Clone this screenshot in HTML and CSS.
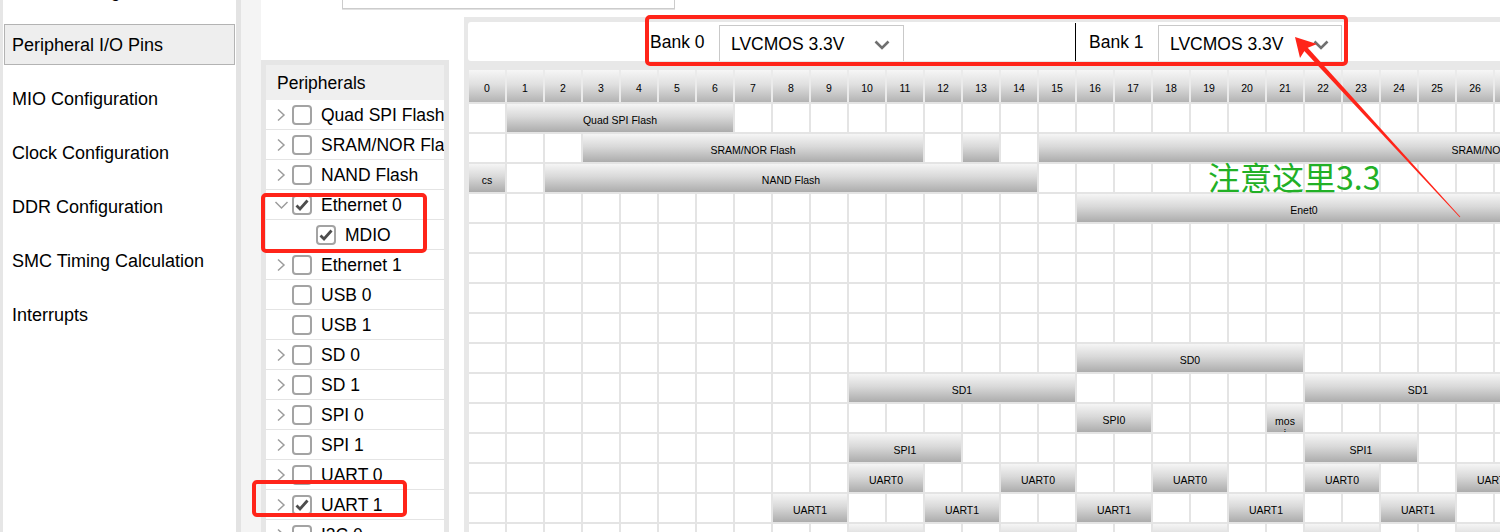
FILE: index.html
```html
<!DOCTYPE html>
<html>
<head>
<meta charset="utf-8">
<link rel="stylesheet" href="styles.css">
</head>
<body>
<div class="app">
  <aside class="sidebar">
    <div class="nav">
      <div class="nav-item">PS-PL Configuration</div>
      <div class="nav-item sel">Peripheral I/O Pins</div>
      <div class="nav-item">MIO Configuration</div>
      <div class="nav-item">Clock Configuration</div>
      <div class="nav-item">DDR Configuration</div>
      <div class="nav-item">SMC Timing Calculation</div>
      <div class="nav-item">Interrupts</div>
    </div>
  </aside>
  <div class="gutter"></div>
  <main class="main">
    <div class="search"></div>
    <div class="work">
      <div class="leftcol">
        <section class="periph">
          <div class="periph-head">Peripherals</div>
          <div class="periph-list">
            <div class="prow"><span class="chev"><svg width="10" height="14" viewBox="0 0 10 14"><polyline points="2,1.5 8,7 2,12.5"/></svg></span><span class="cb"></span><span class="lbl">Quad SPI Flash</span></div>
            <div class="prow"><span class="chev"><svg width="10" height="14" viewBox="0 0 10 14"><polyline points="2,1.5 8,7 2,12.5"/></svg></span><span class="cb"></span><span class="lbl">SRAM/NOR Flash</span></div>
            <div class="prow"><span class="chev"><svg width="10" height="14" viewBox="0 0 10 14"><polyline points="2,1.5 8,7 2,12.5"/></svg></span><span class="cb"></span><span class="lbl">NAND Flash</span></div>
            <div class="prow"><span class="chev down"><svg width="15" height="10" viewBox="0 0 15 10"><polyline points="1.5,2 7.5,8 13.5,2"/></svg></span><span class="cb on"><svg width="16" height="16" viewBox="0 0 16 16"><polyline points="2.5,8.5 6,12 13.5,3.5"/></svg></span><span class="lbl">Ethernet 0</span></div>
            <div class="prow child"><span class="cb on"><svg width="16" height="16" viewBox="0 0 16 16"><polyline points="2.5,8.5 6,12 13.5,3.5"/></svg></span><span class="lbl">MDIO</span></div>
            <div class="prow"><span class="chev"><svg width="10" height="14" viewBox="0 0 10 14"><polyline points="2,1.5 8,7 2,12.5"/></svg></span><span class="cb"></span><span class="lbl">Ethernet 1</span></div>
            <div class="prow"><span class="chev"></span><span class="cb"></span><span class="lbl">USB 0</span></div>
            <div class="prow"><span class="chev"></span><span class="cb"></span><span class="lbl">USB 1</span></div>
            <div class="prow"><span class="chev"><svg width="10" height="14" viewBox="0 0 10 14"><polyline points="2,1.5 8,7 2,12.5"/></svg></span><span class="cb"></span><span class="lbl">SD 0</span></div>
            <div class="prow"><span class="chev"><svg width="10" height="14" viewBox="0 0 10 14"><polyline points="2,1.5 8,7 2,12.5"/></svg></span><span class="cb"></span><span class="lbl">SD 1</span></div>
            <div class="prow"><span class="chev"><svg width="10" height="14" viewBox="0 0 10 14"><polyline points="2,1.5 8,7 2,12.5"/></svg></span><span class="cb"></span><span class="lbl">SPI 0</span></div>
            <div class="prow"><span class="chev"><svg width="10" height="14" viewBox="0 0 10 14"><polyline points="2,1.5 8,7 2,12.5"/></svg></span><span class="cb"></span><span class="lbl">SPI 1</span></div>
            <div class="prow"><span class="chev"><svg width="10" height="14" viewBox="0 0 10 14"><polyline points="2,1.5 8,7 2,12.5"/></svg></span><span class="cb"></span><span class="lbl">UART 0</span></div>
            <div class="prow"><span class="chev"><svg width="10" height="14" viewBox="0 0 10 14"><polyline points="2,1.5 8,7 2,12.5"/></svg></span><span class="cb on"><svg width="16" height="16" viewBox="0 0 16 16"><polyline points="2.5,8.5 6,12 13.5,3.5"/></svg></span><span class="lbl">UART 1</span></div>
            <div class="prow"><span class="chev"><svg width="10" height="14" viewBox="0 0 10 14"><polyline points="2,1.5 8,7 2,12.5"/></svg></span><span class="cb"></span><span class="lbl">I2C 0</span></div>
          </div>
        </section>
      </div>
      <section class="pins">
        <div class="banks">
          <span class="bank-lbl">Bank 0</span>
          <div class="select s0"><span>LVCMOS 3.3V</span><svg width="16" height="10" viewBox="0 0 16 10"><polyline points="1.5,1.5 8,8 14.5,1.5"/></svg></div>
          <span class="bank-sep"></span>
          <span class="bank-lbl">Bank 1</span>
          <div class="select s1"><span>LVCMOS 3.3V</span><svg width="16" height="10" viewBox="0 0 16 10"><polyline points="1.5,1.5 8,8 14.5,1.5"/></svg></div>
        </div>
        <div class="grid">
          <div class="hdr">
            <div>0</div><div>1</div><div>2</div><div>3</div><div>4</div><div>5</div><div>6</div><div>7</div><div>8</div><div>9</div>
            <div>10</div><div>11</div><div>12</div><div>13</div><div>14</div><div>15</div><div>16</div><div>17</div><div>18</div><div>19</div>
            <div>20</div><div>21</div><div>22</div><div>23</div><div>24</div><div>25</div><div>26</div><div>27</div><div>28</div><div>29</div>
          </div>
          <div class="mrow">
            <div class="bar" style="grid-column:2/span 6">Quad SPI Flash</div>
          </div>
          <div class="mrow">
            <div class="bar" style="grid-column:4/span 9">SRAM/NOR Flash</div>
            <div class="bar" style="grid-column:14/span 1"></div>
            <div class="bar" style="grid-column:16/span 24">SRAM/NOR Flash</div>
          </div>
          <div class="mrow">
            <div class="bar" style="grid-column:1/span 1">cs</div>
            <div class="bar" style="grid-column:3/span 13">NAND Flash</div>
          </div>
          <div class="mrow">
            <div class="bar" style="grid-column:17/span 12">Enet0</div>
          </div>
          <div class="mrow"></div>
          <div class="mrow"></div>
          <div class="mrow"></div>
          <div class="mrow"></div>
          <div class="mrow">
            <div class="bar" style="grid-column:17/span 6">SD0</div>
          </div>
          <div class="mrow">
            <div class="bar" style="grid-column:11/span 6">SD1</div>
            <div class="bar" style="grid-column:23/span 6">SD1</div>
          </div>
          <div class="mrow">
            <div class="bar" style="grid-column:17/span 2">SPI0</div>
            <div class="bar wrap" style="grid-column:22/span 1">mos<br>i</div>
          </div>
          <div class="mrow">
            <div class="bar" style="grid-column:11/span 3">SPI1</div>
            <div class="bar" style="grid-column:23/span 3">SPI1</div>
          </div>
          <div class="mrow">
            <div class="bar" style="grid-column:11/span 2">UART0</div>
            <div class="bar" style="grid-column:15/span 2">UART0</div>
            <div class="bar" style="grid-column:19/span 2">UART0</div>
            <div class="bar" style="grid-column:23/span 2">UART0</div>
            <div class="bar" style="grid-column:27/span 2">UART0</div>
          </div>
          <div class="mrow">
            <div class="bar" style="grid-column:9/span 2">UART1</div>
            <div class="bar" style="grid-column:13/span 2">UART1</div>
            <div class="bar" style="grid-column:17/span 2">UART1</div>
            <div class="bar" style="grid-column:21/span 2">UART1</div>
            <div class="bar" style="grid-column:25/span 2">UART1</div>
          </div>
          <div class="mrow">
            <div class="bar" style="grid-column:11/span 2">I2C0</div>
            <div class="bar" style="grid-column:15/span 2">I2C0</div>
            <div class="bar" style="grid-column:19/span 2">I2C0</div>
            <div class="bar" style="grid-column:23/span 2">I2C0</div>
            <div class="bar" style="grid-column:27/span 2">I2C0</div>
          </div>
        </div>
      </section>
    </div>
  </main>
</div>

<div class="mark mark-bank"></div>
<div class="mark mark-eth"></div>
<div class="mark mark-uart"></div>
<div class="note">注意这里3.3</div>
<svg class="arrow" width="1500" height="532" viewBox="0 0 1500 532">
  <polygon points="1301.2,47.8 1304.8,44.4 1460.3,216.8 1459.7,217.2"/>
  <polygon points="1295,37 1317,44 1306,48.5 1300,58"/>
</svg>
</body>
</html>
```
FILE: styles.css
```css
html, body {
  margin: 0;
  padding: 0;
}
body {
  width: 1500px;
  height: 532px;
  overflow: hidden;
  position: relative;
  background: #ffffff;
  font-family: "Liberation Sans", Arial, sans-serif;
  color: #000;
}
.app {
  display: flex;
  height: 532px;
}
.sidebar {
  width: 233px;
  flex: none;
  background: #ffffff;
  border-left: 3px solid #e6e6e6;
  border-right: 5px solid #e3e3e3;
  overflow: hidden;
}
.nav {
  margin-top: -30px;
  padding: 0 1px;
  display: flex;
  flex-direction: column;
  gap: 13px;
}
.nav-item {
  height: 41px;
  box-sizing: border-box;
  border: 1px solid transparent;
  padding-left: 7px;
  padding-top: 2px;
  display: flex;
  align-items: center;
  font-size: 18px;
  white-space: nowrap;
}
.nav-item.sel {
  background: #eeeeee;
  border-color: #b3b3b3;
}
.gutter {
  width: 20px;
  flex: none;
  background: #f4f4f4;
}
.main {
  flex: 1;
  min-width: 0;
  display: flex;
  flex-direction: column;
  overflow: hidden;
}
.search {
  margin-left: 81px;
  width: 333px;
  height: 9px;
  box-sizing: border-box;
  border: 1px solid #cccccc;
  border-top: none;
  box-shadow: 0 1px 0 #e2e2e2;
  flex: none;
}
.work {
  margin-top: 8px;
  display: flex;
  flex: 1;
  min-height: 0;
}
.leftcol {
  width: 188px;
  flex: none;
  padding-top: 43px;
  box-sizing: border-box;
  margin-right: 15px;
}
.periph {
  background: #e6e6e6;
  padding: 5px 5px 0;
  height: 100%;
  box-sizing: border-box;
}
.periph-head {
  height: 35px;
  background: #efefef;
  font-size: 17.5px;
  padding-left: 11px;
  display: flex;
  align-items: center;
  padding-top: 2px;
  box-sizing: border-box;
}
.periph-list {
  background: #ffffff;
  overflow: hidden;
  height: 100%;
}
.prow {
  height: 30px;
  box-sizing: border-box;
  border-bottom: 1px solid #e4e4e4;
  display: flex;
  align-items: center;
  padding-left: 10px;
  white-space: nowrap;
  font-size: 17.5px;
}
.prow.child {
  padding-left: 50px;
}
.chev {
  width: 16px;
  flex: none;
  display: flex;
  align-items: center;
}
.chev svg polyline {
  fill: none;
  stroke: #9c9c9c;
  stroke-width: 1.5;
}
.chev.down svg {
  margin-left: -2px;
}
.cb {
  width: 20px;
  height: 20px;
  flex: none;
  box-sizing: border-box;
  border: 2px solid #a3a3a3;
  border-radius: 4px;
  margin-right: 9px;
  display: flex;
  align-items: center;
  justify-content: center;
}
.cb svg polyline {
  fill: none;
  stroke: #4d4d4d;
  stroke-width: 2.8;
}
.lbl {
  line-height: 1;
  padding-top: 2px;
}
.pins {
  flex: 1;
  min-width: 0;
  background: #e8e8e8;
  padding: 5px 0 0 5px;
  overflow: hidden;
}
.banks {
  margin-left: -1px;
  height: 39px;
  background: #ffffff;
  border-radius: 3px 0 0 3px;
  display: flex;
  align-items: flex-end;
  padding-left: 182px;
  margin-bottom: 9px;
  font-size: 17.5px;
}
.bank-lbl {
  width: 69px;
  flex: none;
  align-self: center;
  padding-top: 2px;
  white-space: nowrap;
}
.select {
  height: 36px;
  box-sizing: border-box;
  border: 1px solid #c9c9c9;
  border-bottom: none;
  display: flex;
  align-items: center;
  justify-content: space-between;
  padding-left: 11px;
  padding-top: 2px;
  flex: none;
}
.select.s0 {
  width: 185px;
  padding-right: 13px;
}
.select.s1 {
  width: 184px;
  padding-right: 12px;
}
.select svg polyline {
  fill: none;
  stroke: #707070;
  stroke-width: 2.6;
}
.bank-sep {
  width: 1px;
  height: 38px;
  background: #000;
  margin-left: 171px;
  margin-right: 13px;
  flex: none;
}
.grid {
  display: flex;
  flex-direction: column;
  gap: 2px;
  background: #e4e4e4;
  width: max-content;
}
.hdr, .mrow {
  display: grid;
  grid-template-columns: repeat(40, 36px);
  column-gap: 2px;
}
.hdr {
  height: 32px;
  background: #ebebeb;
}
.hdr div {
  background: linear-gradient(#f6f6f6, #e0e0e0 45%, #b3b3b3);
  font-size: 10.5px;
  display: flex;
  align-items: center;
  justify-content: center;
  padding-top: 3px;
  box-sizing: border-box;
}
.mrow {
  height: 28px;
  background-color: #ffffff;
  background-image: repeating-linear-gradient(to right, transparent 0 36px, #e4e4e4 36px 38px);
}
.bar {
  grid-row: 1;
  background: linear-gradient(#f5f5f5, #d9d9d9 45%, #acacac);
  font-size: 10.5px;
  display: flex;
  align-items: center;
  justify-content: center;
  padding-top: 3px;
  box-sizing: border-box;
  white-space: nowrap;
  overflow: hidden;
}
.bar.wrap {
  align-items: flex-start;
  padding-top: 11px;
  line-height: 12px;
  text-align: center;
  white-space: normal;
}
.mark {
  position: absolute;
  box-sizing: border-box;
  border: 4px solid #ff2419;
  border-radius: 5px;
}
.mark-bank {
  left: 645px;
  top: 15px;
  width: 703px;
  height: 51px;
}
.mark-eth {
  left: 261px;
  top: 193px;
  width: 166px;
  height: 60px;
}
.mark-uart {
  left: 252px;
  top: 480px;
  width: 155px;
  height: 37px;
}
.note {
  position: absolute;
  left: 1208px;
  top: 159px;
  font-family: "Noto Sans CJK SC", "Noto Sans", sans-serif;
  font-size: 32px;
  line-height: 34px;
  color: #22b026;
  white-space: nowrap;
}
.arrow {
  position: absolute;
  left: 0;
  top: 0;
  pointer-events: none;
}
.arrow polygon {
  fill: #ff2419;
}
```
